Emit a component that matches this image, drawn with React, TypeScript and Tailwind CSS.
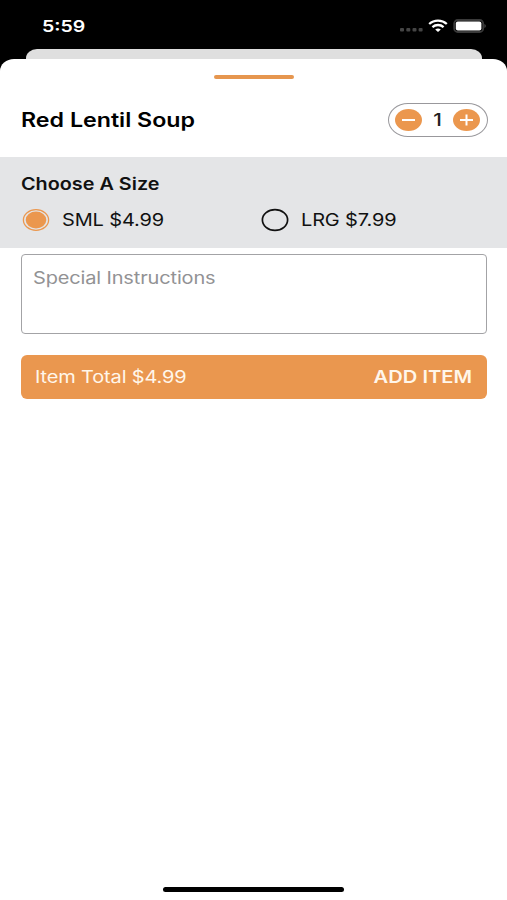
import { useState } from "react";

interface Size {
  label: string;
  price: number;
}

const sizes: Size[] = [
  { label: "SML", price: 4.99 },
  { label: "LRG", price: 7.99 },
];

function StatusBar() {
  return (
    <div className="flex h-[49px] items-start justify-between pl-[42px] pr-[21px] pt-[16px] text-white">
      <span className="origin-left scale-x-[1.22] text-[16px] font-semibold leading-[20px]">5:59</span>
      <svg width="88" height="20" viewBox="0 0 88 20" className="mr-[-1px]">
        <g fill="#454545">
          <rect x="1" y="12" width="4" height="3.5" rx="1" />
          <rect x="7.3" y="12" width="4" height="3.5" rx="1" />
          <rect x="13.5" y="12" width="4" height="3.5" rx="1" />
          <rect x="19.6" y="12" width="4" height="3.5" rx="1" />
        </g>
        <g fill="none" stroke="#fff" strokeWidth="2.3">
          <path d="M30.2 8c5-4.6 12.6-4.6 17.6 0" />
          <path d="M33.4 11.1c3.2-2.8 8-2.8 11.2 0" />
        </g>
        <path d="M36.2 13.4c1.7-1.3 3.9-1.3 5.6 0l-2.8 2.5z" fill="#fff" />
        <rect x="55.2" y="4" width="29" height="12" rx="3.5" fill="none" stroke="#3a3a3a" strokeWidth="1.8" />
        <rect x="56.8" y="5.6" width="25.6" height="8.8" rx="2" fill="#fff" />
        <path d="M85.5 8c1.6.6 1.6 3.4 0 4z" fill="#555" />
      </svg>
    </div>
  );
}

function Quantity({ value, onChange }: { value: number; onChange: (n: number) => void }) {
  return (
    <div className="flex h-[34px] w-[100px] items-center justify-between rounded-[20px/17px] border border-[#99989c] px-[6.5px]">
      <button aria-label="Decrease" onClick={() => onChange(Math.max(1, value - 1))}>
        <svg width="27" height="22" viewBox="0 0 27 22" className="block">
          <ellipse cx="13.5" cy="11" rx="13.5" ry="11" fill="#eb974e" />
          <path d="M7 11h13" stroke="#fff" strokeWidth="2" />
        </svg>
      </button>
      <span className="scale-x-[1.22] text-[17px] font-medium leading-[22px] text-[#222]">{value}</span>
      <button aria-label="Increase" onClick={() => onChange(value + 1)}>
        <svg width="27" height="22" viewBox="0 0 27 22" className="block">
          <ellipse cx="13.5" cy="11" rx="13.5" ry="11" fill="#eb974e" />
          <path d="M7 11h13M13.5 5.5v11" stroke="#fff" strokeWidth="2" />
        </svg>
      </button>
    </div>
  );
}

function Radio({ checked }: { checked: boolean }) {
  return (
    <svg width="29" height="24" viewBox="0 0 29 24">
      <ellipse cx="15" cy="12" rx="12.6" ry="10.3" fill="none" stroke={checked ? "#eb974e" : "#111"} strokeWidth={checked ? 1.3 : 1.7} />
      {checked && <ellipse cx="15" cy="12" rx="10.3" ry="8.4" fill="#eb974e" />}
    </svg>
  );
}

export default function App() {
  const [quantity, setQuantity] = useState(1);
  const [selected, setSelected] = useState(0);
  const total = (sizes[selected].price * quantity).toFixed(2);

  return (
    <div className="flex h-[900px] w-[507px] flex-col overflow-hidden bg-black font-['Inter','Liberation_Sans',sans-serif] text-[17px] text-[#111]">
      <StatusBar />
      {/* edge of the card behind the sheet */}
      <div className="mx-[25.5px] h-[10px] shrink-0 rounded-t-[11px_9px] bg-[#dfdfdf]" />
      <div className="flex flex-1 flex-col rounded-t-[14px_12px] bg-white">
        <div className="mx-auto mt-[16px] h-[4px] w-[80px] shrink-0 rounded-full bg-[#e6964f]" />

        <div className="flex h-[78px] items-center justify-between pl-[21px] pr-[19.5px] pt-[4px]">
          <h1 className="origin-left scale-x-[1.19] whitespace-nowrap text-[19.5px] font-semibold leading-[24px] text-black">
            Red Lentil Soup
          </h1>
          <Quantity value={quantity} onChange={setQuantity} />
        </div>

        <div className="h-[91px] bg-[#e4e5e7] pl-[21px] pt-[16px]">
          <h2 className="w-fit origin-left scale-x-[1.165] font-semibold leading-[22px]">Choose A Size</h2>
          <div className="mt-[13px] grid grid-cols-[238.5px_1fr]">
            {sizes.map((size, i) => (
              <button key={size.label} className="flex items-center gap-[12px] text-left" onClick={() => setSelected(i)}>
                <Radio checked={i === selected} />
                <span className="origin-left scale-x-[1.175] tracking-[-0.12px] leading-[24px]">
                  {size.label} ${size.price}
                </span>
              </button>
            ))}
          </div>
        </div>

        <div className="ml-[20.5px] mr-[20px] mt-[6px] h-[80px] rounded-[4px] border border-[#a3a3a6] pl-[11px] pt-[11px]">
          <span className="inline-block origin-left scale-x-[1.175] tracking-[-0.12px] leading-[22px] text-[#929294]">
            Special Instructions
          </span>
        </div>

        <button className="ml-[20.5px] mr-[20px] mt-[21px] flex h-[44px] items-center justify-between rounded-[6px] bg-[#ea974f] pl-[14.5px] pr-[15px] pt-[1px] text-[#fff6ea]">
          <span className="origin-left scale-x-[1.175] tracking-[-0.12px]">Item Total ${total}</span>
          <span className="origin-right scale-x-[1.185] font-semibold">ADD ITEM</span>
        </button>

        <div className="mx-auto mb-[8px] mt-auto h-[5px] w-[181px] rounded-full bg-black" />
      </div>
    </div>
  );
}
